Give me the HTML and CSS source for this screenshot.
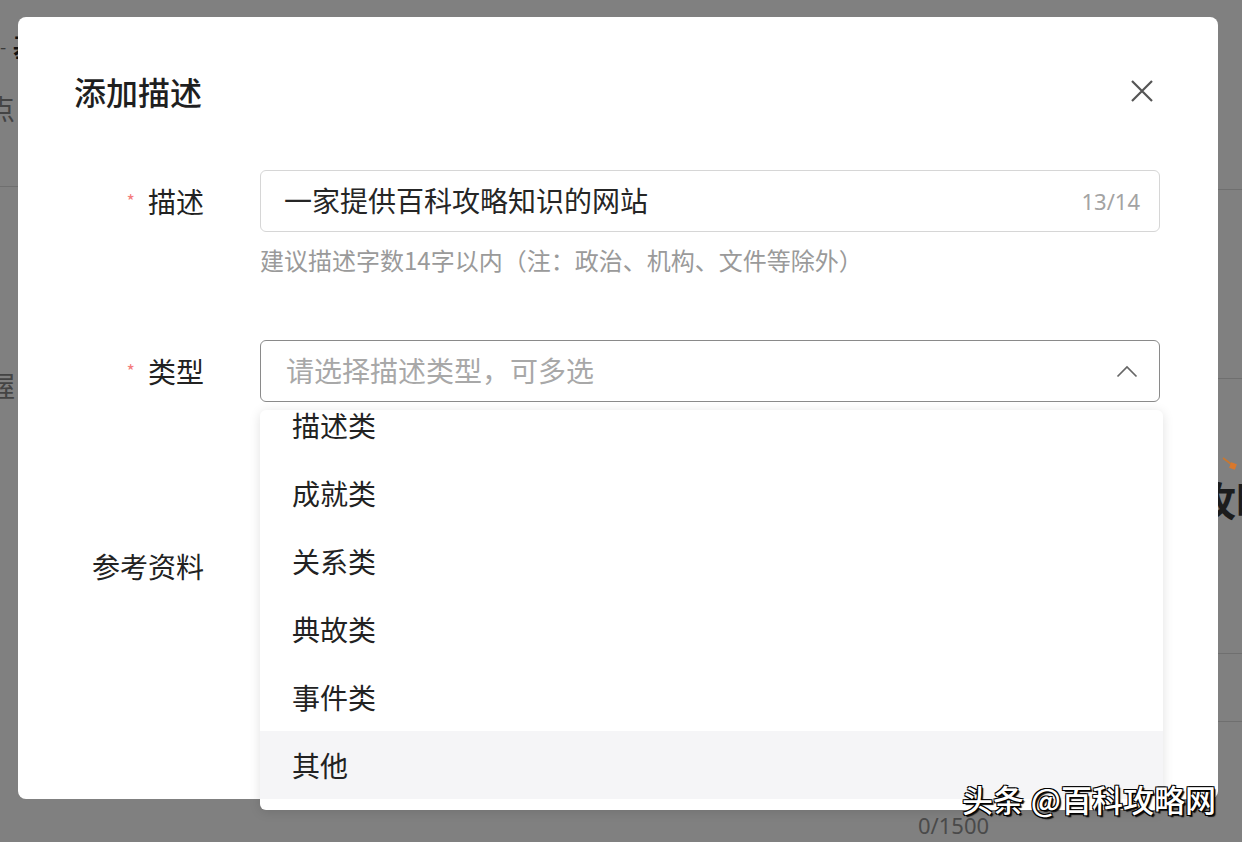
FILE: index.html
```html
<!DOCTYPE html>
<html lang="zh-CN">

<head>
    <meta charset="UTF-8">
    <meta name="viewport" content="width=device-width, initial-scale=1.0">
    <title>添加描述</title>

    <link rel="stylesheet" href="styles.css">
</head>

<body>
    <div class="page">
        <div class="bg-left">
            <div class="bg-row bg-l1"><span class="bg-back">-</span><span class="bg-head">基</span></div>
            <div class="bg-row bg-l2"><span class="bg-cut">点</span></div>
            <div class="bg-row bg-l3"><span class="bg-cut">握</span></div>
        </div>
        <div class="bg-middle"></div>
        <div class="bg-right">
            <div class="bg-line bg-r1"></div>
            <div class="bg-line bg-r2"></div>
            <div class="bg-line bg-r3">
                <svg class="bg-icon" width="16" height="14" viewBox="0 0 16 14">
                    <path d="M1 1 L9 7" stroke="#c9772f" stroke-width="1.6" fill="none" />
                    <rect x="8" y="6" width="6" height="6" transform="rotate(20 11 9)" fill="#d9782c" />
                </svg>
                <span class="bg-big">攻略</span>
            </div>
            <div class="bg-line bg-r4"></div>
        </div>
        <div class="bg-foot">0/1500</div>

        <div class="modal">
            <div class="modal-header">
                <h2>添加描述</h2>
                <svg class="close" width="24" height="24" viewBox="0 0 24 24">
                    <path d="M2 2 L22 22 M22 2 L2 22" stroke="#555" stroke-width="2.2" fill="none" />
                </svg>
            </div>

            <div class="form">
                <div class="form-row">
                    <div class="label"><span class="star">*</span>描述</div>
                    <div class="control">
                        <div class="field">
                            <span class="value">一家提供百科攻略知识的网站</span>
                            <span class="count">13/14</span>
                        </div>
                        <div class="hint">建议描述字数14字以内（注：政治、机构、文件等除外）</div>
                    </div>
                </div>

                <div class="form-row row-type">
                    <div class="label"><span class="star">*</span>类型</div>
                    <div class="control">
                        <div class="field select">
                            <span class="placeholder">请选择描述类型，可多选</span>
                            <svg class="arrow" width="22" height="13" viewBox="0 0 22 13">
                                <path d="M1.5 11.5 L11 2 L20.5 11.5" stroke="#666" stroke-width="1.7" fill="none" />
                            </svg>
                        </div>
                        <div class="dropdown">
                            <ul class="options">
                                <li>描述类</li>
                                <li>成就类</li>
                                <li>关系类</li>
                                <li>典故类</li>
                                <li>事件类</li>
                                <li class="hover">其他</li>
                            </ul>
                        </div>
                    </div>
                </div>

                <div class="form-row row-ref">
                    <div class="label">参考资料</div>
                    <div class="control"></div>
                </div>
            </div>
        </div>

        <div class="watermark">头条 @百科攻略网</div>
    </div>
</body>

</html>
```

FILE: styles.css
```css
* {
    box-sizing: border-box;
}

body {
    margin: 0;
    font-family: "Noto Sans CJK SC", "Noto Sans", sans-serif;
}

.page {
    position: relative;
    width: 1242px;
    height: 842px;
    overflow: hidden;
    background-color: #808080;
    display: grid;
    grid-template-columns: 18px 1fr 24px;
    grid-template-rows: 800px 42px;
}

/* page under the mask */
.bg-left {
    grid-row: 1 / 3;
    overflow: hidden;
}

.bg-row {
    display: flex;
    white-space: nowrap;
    line-height: 28px;
}

.bg-l1 {
    height: 80px;
    padding-top: 32px;
    align-items: flex-start;
}

.bg-back {
    font-size: 18px;
    color: #3a3a3a;
    width: 13px;
    flex-shrink: 0;
}

.bg-head {
    font-size: 26px;
    font-weight: bold;
    color: #111;
}

.bg-l2 {
    height: 107px;
    padding-top: 14px;
    justify-content: flex-end;
    border-bottom: 1px solid #6f6f6f;
}

.bg-l3 {
    padding-top: 184px;
    justify-content: flex-end;
}

.bg-cut {
    font-size: 28px;
    color: #444;
    margin-right: 3px;
}

.bg-right {
    grid-row: 1 / 3;
    overflow: hidden;
}

.bg-line {
    border-bottom: 1px solid #6f6f6f;
}

.bg-r1 {
    height: 190px;
}

.bg-r2 {
    height: 189px;
}

.bg-r3 {
    height: 275px;
    padding-top: 78px;
    white-space: nowrap;
}

.bg-icon {
    display: block;
    margin-left: 4px;
}

.bg-big {
    display: block;
    margin-top: 6px;
    margin-left: -22px;
    font-size: 40px;
    line-height: 44px;
    font-weight: bold;
    color: #1c1c1c;
}

.bg-r4 {
    height: 68px;
}

.bg-foot {
    grid-column: 2;
    grid-row: 2;
    padding: 12px 0 0 900px;
    font-size: 22px;
    line-height: 26px;
    color: #4a4a4a;
    font-family: "Noto Sans", sans-serif;
}

/* dialog */
.modal {
    position: absolute;
    left: 18px;
    top: 17px;
    width: 1200px;
    height: 782px;
    background-color: #fff;
    border-radius: 8px;
    padding: 54px 56px 0 56px;
}

.modal-header {
    display: flex;
    justify-content: space-between;
    align-items: center;
    padding-right: 8px;
}

.modal-header h2 {
    margin: 0;
    font-size: 32px;
    line-height: 40px;
    font-weight: 500;
    color: #1f1f1f;
}

.form {
    margin-top: 59px;
    padding-right: 2px;
}

.form-row {
    display: flex;
    gap: 56px;
}

.label {
    width: 130px;
    flex-shrink: 0;
    text-align: right;
    font-size: 28px;
    line-height: 60px;
    color: #222;
    white-space: nowrap;
}

.star {
    color: #f47c7c;
    font-size: 18px;
    margin-right: 13px;
    vertical-align: 5px;
}

.control {
    flex: 1;
    position: relative;
}

.field {
    height: 62px;
    border: 1px solid #d6d6d6;
    border-radius: 6px;
    display: flex;
    align-items: center;
    justify-content: space-between;
    padding: 0 19px 0 23px;
}

.value {
    font-size: 28px;
    line-height: 36px;
    margin-top: -2px;
    color: #262626;
}

.count {
    font-size: 22px;
    color: #a3a3a3;
    font-family: "Noto Sans", sans-serif;
}

.hint {
    margin-top: 12px;
    font-size: 24px;
    line-height: 32px;
    color: #9a9a9a;
}

.row-type {
    margin-top: 64px;
}

.select {
    border-color: #8a8a8a;
    padding: 0 21px 0 25px;
}

.placeholder {
    font-size: 28px;
    line-height: 36px;
    margin-top: -2px;
    color: #a8a8a8;
}

.arrow {
    display: block;
}

.dropdown {
    position: absolute;
    top: 70px;
    left: 0;
    width: 903px;
    height: 400px;
    background-color: #fff;
    border-radius: 6px;
    box-shadow: 0 2px 12px rgba(0, 0, 0, 0.12);
    overflow: hidden;
    z-index: 2;
}

.options {
    list-style: none;
    margin: -19px 0 0 0;
    padding: 0;
}

.options li {
    height: 68px;
    line-height: 68px;
    padding-left: 32px;
    font-size: 28px;
    color: #222;
}

.options li.hover {
    background-color: #f5f5f7;
}

.row-ref {
    margin-top: 134px;
}

.watermark {
    position: absolute;
    right: 26px;
    top: 780px;
    font-size: 31px;
    line-height: 38px;
    font-weight: 500;
    color: #fff;
    white-space: nowrap;
    text-shadow: -1px -1px 0 #000, 1px -1px 0 #000, -1px 1px 0 #000, 1px 1px 0 #000, 2px 2px 1px #111;
    z-index: 3;
}
```
